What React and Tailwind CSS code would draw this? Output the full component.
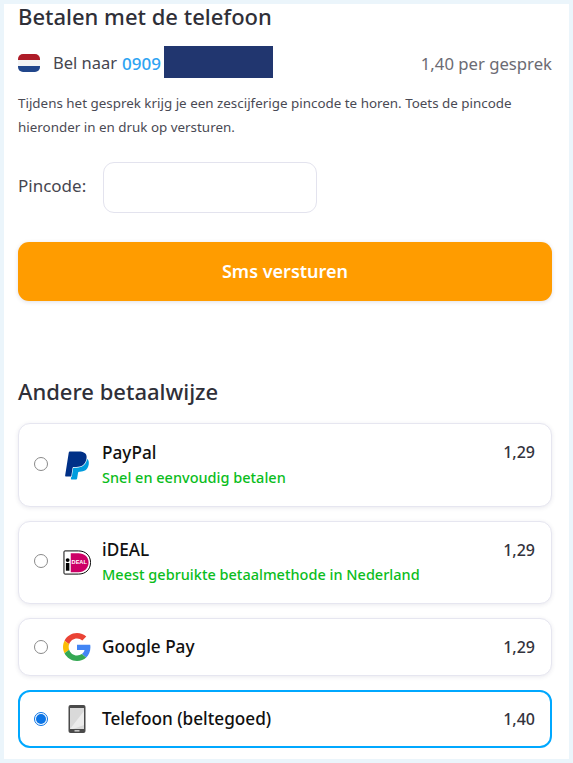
import React from 'react';

function FlagIcon() {
  return (
    <svg width="22" height="18" viewBox="0 0 22 18" className="shrink-0 mt-[2px]">
      <defs>
        <clipPath id="flag-clip">
          <rect x="0" y="0" width="22" height="18" rx="5" />
        </clipPath>
      </defs>
      <g clipPath="url(#flag-clip)">
        <rect width="22" height="6" fill="#ae1c28" />
        <rect y="6" width="22" height="6" fill="#f4f4f4" />
        <rect y="12" width="22" height="6" fill="#21468b" />
      </g>
    </svg>
  );
}

function PayPalIcon() {
  return (
    <svg width="29" height="29" viewBox="0 0 24 24">
      <path
        fill="#009cde"
        d="M21.222 6.917a3.350 3.350 0 0 0-.607-.541c-.013.076-.026.175-.041.254-.930 4.778-4.005 7.201-9.138 7.201h-2.190a.563.563 0 0 0-.556.479l-1.187 7.527h-.506l-.240 1.516a.560.560 0 0 0 .554.647h3.882c.460 0 .850-.334.922-.788.060-.260.760-4.852.816-5.090a.932.932 0 0 1 .923-.788h.580c3.760 0 6.705-1.528 7.565-5.946.360-1.847.174-3.388-.777-4.471z"
      />
      <path
        fill="#003087"
        d="M7.076 21.337H2.470a.641.641 0 0 1-.633-.740L4.944.901C5.026.382 5.474 0 5.998 0h7.460c2.570 0 4.578.543 5.690 1.810 1.010 1.150 1.304 2.420 1.012 4.287-.023.143-.047.288-.077.437-.983 5.050-4.349 6.797-8.647 6.797h-2.190c-.524 0-.968.382-1.050.900l-1.120 7.106z"
      />
    </svg>
  );
}

function IdealIcon() {
  return (
    <svg width="29" height="25" viewBox="0 0 29 25">
      <path d="M1 1.500a1 1 0 0 1 1-1h14c7.500 0 12.500 4.800 12.500 12S23.500 24.500 16 24.500H2a1 1 0 0 1-1-1z" fill="#fff" stroke="#000" strokeWidth="1" />
      <path d="M8 3h8c6 0 10.500 3.800 10.500 9.500S22 22.500 16 22.500H8z" fill="#cc0066" />
      <circle cx="4.800" cy="10" r="2" fill="#000" />
      <rect x="3" y="13" width="3.600" height="8" fill="#000" />
      <text x="16.800" y="14.500" textAnchor="middle" fontSize="5.800" fontWeight="700" fill="#fff" fontFamily="'Liberation Sans', sans-serif">DEAL</text>
    </svg>
  );
}

function GoogleIcon() {
  return (
    <svg width="28" height="28" viewBox="0 0 48 48">
      <path fill="#EA4335" d="M24 9.500c3.500 0 6.700 1.300 9.100 3.500l6.800-6.800C35.800 2.400 30.200 0 24 0 14.600 0 6.500 5.400 2.600 13.200l7.900 6.200C12.400 13.600 17.700 9.500 24 9.500z" />
      <path fill="#4285F4" d="M47 24.500c0-1.600-.1-3.100-.4-4.500H24v9h12.900c-.6 3-2.200 5.400-4.700 7.100l7.600 5.900C44.200 37.900 47 31.800 47 24.500z" />
      <path fill="#FBBC05" d="M10.500 28.600c-.5-1.500-.8-3-.8-4.600s.3-3.200.8-4.600l-7.900-6.200C.9 16.500 0 20.100 0 24s.9 7.500 2.600 10.800z" />
      <path fill="#34A853" d="M24 48c6.500 0 11.900-2.100 15.800-5.900l-7.600-5.900c-2.100 1.400-4.900 2.300-8.200 2.300-6.300 0-11.600-4.100-13.500-9.900l-7.900 6.200C6.500 42.600 14.600 48 24 48z" />
    </svg>
  );
}

function PhoneIcon() {
  return (
    <svg width="18" height="28" viewBox="0 0 18 28">
      <rect x="0.500" y="0" width="17" height="28" rx="2" fill="#4a4a4a" />
      <rect x="2" y="3" width="14" height="21" fill="#d9d9d9" />
      <path d="M16 6v14L5 24H2z" fill="#ececec" />
      <rect x="6.500" y="25" width="5" height="1.600" fill="#c4c4c4" />
    </svg>
  );
}

function Radio({ checked }) {
  return (
    <span
      className={`w-[14px] h-[14px] rounded-full border shrink-0 flex items-center justify-center bg-white ${
        checked ? 'border-[#0b74e5]' : 'border-[#8a8a8a]'
      }`}
    >
      {checked && <span className="w-[10px] h-[10px] rounded-full bg-[#0b74e5]" />}
    </span>
  );
}

function PayOption({ name, note, price, icon, checked, height }) {
  return (
    <div
      className={`flex items-center bg-white rounded-[12px] ${height} ${
        checked
          ? 'border-2 border-[#00a8ff] pl-[14px] pr-[15px]'
          : 'border border-[#e6e6f0] pl-[15px] pr-[16px] shadow-[0_1px_4px_rgba(40,40,90,0.1)]'
      }`}
    >
      <div className={note ? '-mt-[3px]' : ''}>
        <Radio checked={checked} />
      </div>
      <div className="w-[28px] ml-[15px] flex justify-center shrink-0">{icon}</div>
      <div className={`ml-[11px] flex-1 ${note ? '-mt-[2px]' : ''}`}>
        <div className="text-[17.200px] leading-[22px] font-medium text-[#111]">{name}</div>
        {note && <div className="text-[14.500px] leading-[20px] mt-[3px] font-medium text-[#0bbd1c]">{note}</div>}
      </div>
      <div className={`text-[16px] font-medium text-[#33333d] ${note ? 'self-start mt-[16px]' : ''}`}>{price}</div>
    </div>
  );
}

export default function App() {
  return (
    <div className="bg-[#ebf5fb] p-[4px] h-[763px] font-['Noto_Sans',sans-serif] overflow-hidden">
      <div className="bg-white h-[755px] pl-[14px] pr-[17px]">
        <h1 className="text-[22px] leading-[24px] font-medium text-[#2f2f38]">Betalen met de telefoon</h1>

        <div className="flex items-center mt-[18px] h-[32px]">
          <FlagIcon />
          <span className="ml-[13px] mt-[3px] text-[16.500px] text-[#46464f]">Bel naar</span>
          <span className="ml-[5px] mt-[3px] text-[17px] font-medium text-[#2ea3f2]">0909</span>
          <span className="ml-[3px] w-[109px] h-[32px] bg-[#21366f]" />
          <span className="ml-auto mt-[3px] text-[16.700px] text-[#6b6b73]">1,40 per gesprek</span>
        </div>

        <p className="mt-[13px] text-[13.400px] leading-[24px] text-[#4a4a54]">
          Tijdens het gesprek krijg je een zescijferige pincode te horen. Toets de pincode hieronder in en druk op versturen.
        </p>

        <div className="flex items-center mt-[23px]">
          <label className="text-[17px] text-[#46464f] w-[85px] -mt-[4px]">Pincode:</label>
          <input className="w-[214px] h-[51px] rounded-[11px] border border-[#e3e3ee] bg-white" />
        </div>

        <button className="block w-full h-[59px] mt-[29px] rounded-[11px] bg-[#ff9c00] text-white text-[18px] font-semibold shadow-[0_1px_4px_rgba(40,40,90,0.15)]">
          Sms versturen
        </button>

        <h2 className="mt-[76px] text-[22px] leading-[28px] font-medium text-[#2f2f38]">Andere betaalwijze</h2>

        <div className="mt-[18px] flex flex-col gap-[14px]">
          <PayOption name="PayPal" note="Snel en eenvoudig betalen" price="1,29" icon={<PayPalIcon />} height="h-[84px]" />
          <PayOption name="iDEAL" note="Meest gebruikte betaalmethode in Nederland" price="1,29" icon={<IdealIcon />} height="h-[83px]" />
          <PayOption name="Google Pay" price="1,29" icon={<GoogleIcon />} height="h-[58px]" />
          <PayOption name="Telefoon (beltegoed)" price="1,40" icon={<PhoneIcon />} checked height="h-[58px]" />
        </div>
      </div>
    </div>
  );
}
